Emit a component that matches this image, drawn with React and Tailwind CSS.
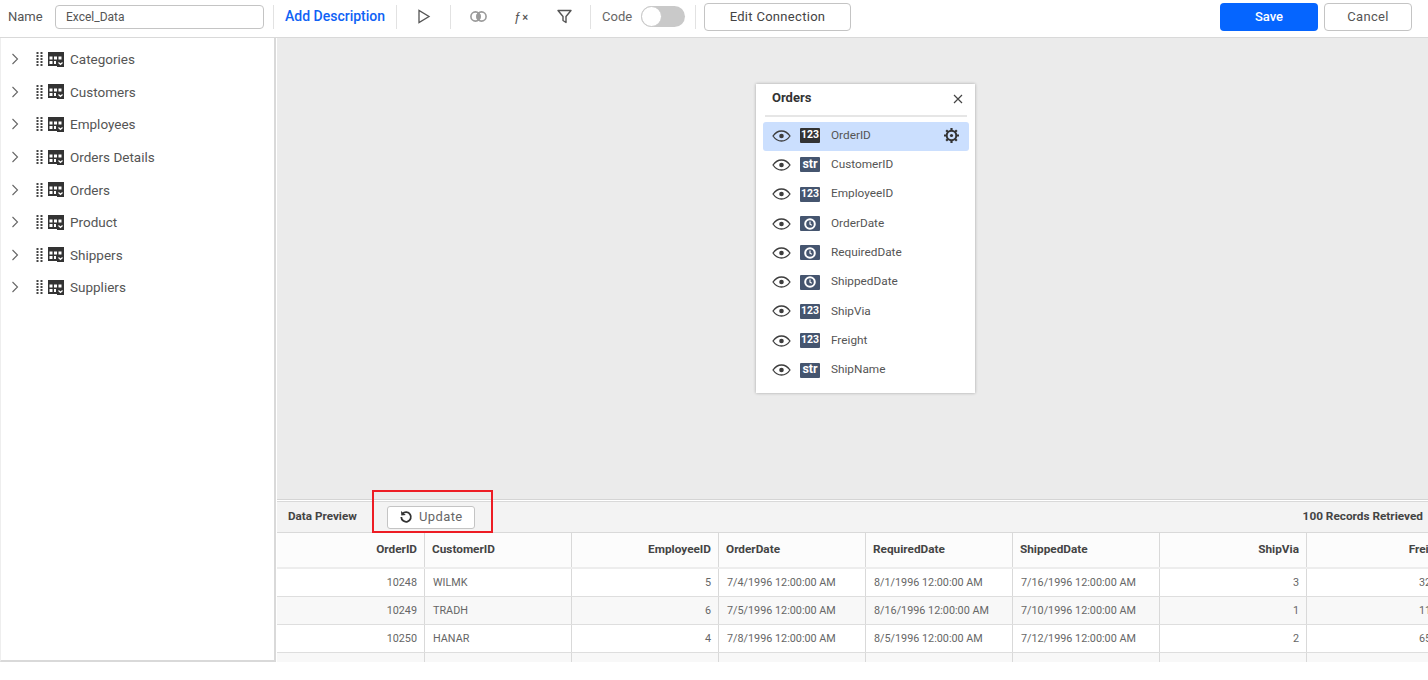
import React from 'react';

const tables = ['Categories', 'Customers', 'Employees', 'Orders Details', 'Orders', 'Product', 'Shippers', 'Suppliers'];

const fields = [
  { name: 'OrderID', type: '123', active: true },
  { name: 'CustomerID', type: 'str' },
  { name: 'EmployeeID', type: '123' },
  { name: 'OrderDate', type: 'date' },
  { name: 'RequiredDate', type: 'date' },
  { name: 'ShippedDate', type: 'date' },
  { name: 'ShipVia', type: '123' },
  { name: 'Freight', type: '123' },
  { name: 'ShipName', type: 'str' },
];

const columns = [
  { name: 'OrderID', right: true },
  { name: 'CustomerID' },
  { name: 'EmployeeID', right: true },
  { name: 'OrderDate' },
  { name: 'RequiredDate' },
  { name: 'ShippedDate' },
  { name: 'ShipVia', right: true },
  { name: 'Freight', right: true },
];

const rows = [
  ['10248', 'WILMK', '5', '7/4/1996 12:00:00 AM', '8/1/1996 12:00:00 AM', '7/16/1996 12:00:00 AM', '3', '32.38'],
  ['10249', 'TRADH', '6', '7/5/1996 12:00:00 AM', '8/16/1996 12:00:00 AM', '7/10/1996 12:00:00 AM', '1', '11.61'],
  ['10250', 'HANAR', '4', '7/8/1996 12:00:00 AM', '8/5/1996 12:00:00 AM', '7/12/1996 12:00:00 AM', '2', '65.83'],
  ['', '', '', '', '', '', '', ''],
];

const Divider = ({ className }) => <div className={`w-px h-[24px] bg-[#e2e2e2] shrink-0 ${className}`} />;

const Grip = () => (
  <svg width="7" height="14" viewBox="0 0 7 14" className="shrink-0">
    {[1, 4, 7, 10, 13].map((y) => (
      <g key={y} fill="#444">
        <rect x="0.5" y={y - 1} width="2" height="2" />
        <rect x="4.5" y={y - 1} width="2" height="2" />
      </g>
    ))}
  </svg>
);

const TableIcon = () => (
  <svg width="16" height="15" viewBox="0 0 16 15" className="shrink-0">
    <path d="M0 0h16v9h-3.500a3.500 3.500 0 0 0-3.500 3.500V14H0z" fill="#333" />
    <g fill="#fff">
      <rect x="1.500" y="4.500" width="3" height="3" />
      <rect x="6" y="4.500" width="3" height="3" />
      <rect x="10.500" y="4.500" width="3" height="3" />
      <rect x="1.500" y="9" width="3" height="3" />
      <rect x="6" y="9" width="2" height="3" />
    </g>
    <rect x="9" y="8" width="7" height="7" fill="#333" />
    <path d="M10.500 10.500l2 2 2-2" fill="none" stroke="#fff" strokeWidth="1.200" />
  </svg>
);

const Eye = () => (
  <svg width="19" height="12" viewBox="0 0 19 12" className="shrink-0">
    <path d="M1 6c2.300-3.300 5-5 8.500-5s6.200 1.700 8.500 5c-2.300 3.300-5 5-8.500 5S3.300 9.300 1 6z" fill="none" stroke="#3d3d3d" strokeWidth="1.300" />
    <circle cx="9.500" cy="6" r="2.300" fill="#3d3d3d" />
  </svg>
);

const Gear = () => (
  <svg width="15" height="15" viewBox="0 0 15 15">
    <circle cx="7.500" cy="7.500" r="4.800" fill="none" stroke="#333" strokeWidth="2" />
    <circle cx="7.500" cy="7.500" r="1.600" fill="#333" />
    <g stroke="#333" strokeWidth="2.200">
      <path d="M7.500 0v2.500M7.500 12.500V15M0 7.500h2.500M12.500 7.500H15" />
      <path d="M2.200 2.200l1.800 1.800M11 11l1.800 1.800M12.800 2.200L11 4M4 11l-1.800 1.800" />
    </g>
  </svg>
);

const TypeBadge = ({ type, active }) => (
  <div className={`w-[20px] h-[15px] rounded-[1px] flex items-center justify-center text-white font-bold shrink-0 ${active ? 'bg-[#333333]' : 'bg-[#45556f]'}`}>
    {type === 'date' ? (
      <svg width="12" height="12" viewBox="0 0 12 12">
        <circle cx="6" cy="6" r="4.800" fill="none" stroke="#fff" strokeWidth="2" />
        <path d="M6 3.500v2.700l1.800 1" fill="none" stroke="#fff" strokeWidth="1.200" />
      </svg>
    ) : (
      <span className={type === 'str' ? 'text-[12.500px] leading-none mb-px' : 'text-[10.500px] leading-none'}>{type}</span>
    )}
  </div>
);

const App = () => {
  return (
    <div className="w-[1428px] h-[680px] bg-white overflow-hidden relative font-['Roboto',sans-serif]">
      {/* toolbar */}
      <div className="h-[38px] pb-[4px] border-b border-[#d9d9d9] flex items-center text-[#555555]">
        <span className="ml-[8px] w-[47px] text-[13px]">Name</span>
        <div className="w-[209px] h-[24px] border border-[#c4c4c4] rounded-[4px] pl-[10px] flex items-center text-[12px]">Excel_Data</div>
        <Divider className="ml-[9px]" />
        <span className="ml-[11px] w-[101px] text-[14px] font-medium text-[#0f62f5] whitespace-nowrap">Add Description</span>
        <Divider className="ml-[10px]" />
        <svg width="14" height="15" viewBox="0 0 14 15" className="ml-[20px]">
          <path d="M2 1.500v12l10-6z" fill="none" stroke="#555" strokeWidth="1.300" />
        </svg>
        <Divider className="ml-[19px]" />
        <svg width="17" height="11" viewBox="0 0 17 11" className="ml-[19px]">
          <circle cx="5.500" cy="5.500" r="4.600" fill="#fff" stroke="#9a9a9a" strokeWidth="1.600" />
          <circle cx="11.500" cy="5.500" r="4.600" fill="none" stroke="#9a9a9a" strokeWidth="1.600" />
          <path d="M8.500 1.500a4.700 4.700 0 0 1 0 8 4.700 4.700 0 0 1 0-8z" fill="#9a9a9a" />
        </svg>
        <span className="ml-[27px] w-[15px] text-[13px] font-['Liberation_Sans',sans-serif] text-[#555555] leading-none whitespace-nowrap">
          ƒ<span className="text-[10px] font-bold ml-px">×</span>
        </span>
        <svg width="15" height="15" viewBox="0 0 15 15" className="ml-[28px]">
          <path d="M1 1.500h13L9 7.500v6l-3-2v-4z" fill="none" stroke="#555" strokeWidth="1.400" strokeLinejoin="round" />
        </svg>
        <Divider className="ml-[18px]" />
        <span className="ml-[11px] w-[39px] text-[13px] text-[#666666]">Code</span>
        <div className="w-[44px] h-[21px] rounded-full bg-[#c9c9c9] relative">
          <div className="absolute left-0 top-0 w-[21px] h-[21px] rounded-full bg-white border border-[#c9c9c9]" />
        </div>
        <Divider className="ml-[10px]" />
        <button className="ml-[8px] w-[147px] h-[28px] border border-[#c4c4c4] rounded-[4px] text-[13px] tracking-[0.3px] text-[#444444]">Edit Connection</button>
        <button className="ml-auto w-[98px] h-[28px] rounded-[4px] bg-[#0565ff] text-white text-[13px] font-medium">Save</button>
        <button className="ml-[6px] mr-[16px] w-[88px] h-[28px] border border-[#c4c4c4] rounded-[4px] text-[13px] tracking-[0.3px] text-[#555555]">Cancel</button>
      </div>

      <div className="h-[624px] flex">
        {/* table list */}
        <div className="w-[276px] shrink-0 border-r-2 border-b-2 border-[#d9d9d9] pt-[5px] border-l border-l-[#eeeeee]">
          {tables.map((t) => (
            <div key={t} className="h-[32.600px] flex items-center pl-[10px] text-[13.500px] text-[#555555]">
              <svg width="8" height="12" viewBox="0 0 8 12" className="shrink-0">
                <path d="M1.500 1l5 5-5 5" fill="none" stroke="#666" strokeWidth="1.100" />
              </svg>
              <div className="ml-[17px] flex items-center">
                <Grip />
              </div>
              <div className="ml-[5px]">
                <TableIcon />
              </div>
              <span className="ml-[6px]">{t}</span>
            </div>
          ))}
        </div>

        <div className="ml-px flex-1 min-w-0 flex flex-col">
          {/* canvas */}
          <div className="h-[462px] shrink-0 bg-[#ebebeb] border-b border-[#d4d4d4] pt-[46px] pl-[479px]">
            <div className="w-[219px] h-[309px] bg-white shadow-[0_0_3px_rgba(0,0,0,0.3)] pl-[7px] pr-[6px]">
              <div className="h-[33px] mx-[2px] border-b-2 border-[#e6e6e6] flex items-start justify-between pl-[7px] pr-[3px] pt-[4px]">
                <span className="text-[13px] font-bold text-[#333333]">Orders</span>
                <svg width="10" height="10" viewBox="0 0 10 10" className="mt-[6px] mr-[1px]">
                  <path d="M1 1l8 8M9 1l-8 8" stroke="#444" strokeWidth="1.200" />
                </svg>
              </div>
              <div className="mt-[5px]">
                {fields.map((f) => (
                  <div key={f.name} className={`h-[29.300px] flex items-center pl-[9px] pr-[10px] pb-[2px] rounded-[3px] ${f.active ? 'bg-[#cbdffe]' : ''}`}>
                    <Eye />
                    <div className="ml-[9px]">
                      <TypeBadge type={f.type} active={f.active} />
                    </div>
                    <span className="ml-[11px] text-[11.800px] text-[#555555]">{f.name}</span>
                    {f.active && (
                      <div className="ml-auto">
                        <Gear />
                      </div>
                    )}
                  </div>
                ))}
              </div>
            </div>
          </div>

          {/* data preview */}
          <div className="h-[32px] shrink-0 mt-px bg-[#f3f3f3] border-t border-b border-[#d9d9d9] flex items-center pl-[11px] pr-[5px] text-[#444444]">
            <span className="text-[11.700px] font-bold text-[#444444]">Data Preview</span>
            <button className="ml-[30px] w-[88px] h-[23px] bg-white border border-[#c4c4c4] rounded-[3px] flex items-center justify-center gap-[6px] text-[13px] tracking-[0.4px] text-[#666666]">
              <svg width="14" height="14" viewBox="0 0 14 14">
                <path d="M3.500 3.800a4.800 4.800 0 1 1-1.200 3.200" fill="none" stroke="#333" strokeWidth="1.800" />
                <path d="M2 1l.3 4.500 4.500-.5z" fill="#333" />
              </svg>
              Update
            </button>
            <span className="ml-auto text-[11.800px] font-bold text-[#444444]">100 Records Retrieved</span>
          </div>

          {/* grid */}
          <div className="flex-1 min-h-0 overflow-hidden">
            <div className="w-[1177px]">
              <div className="h-[36px] grid grid-cols-[148px_repeat(7,147px)] border-b-2 border-[#ededed] bg-[#fcfcfc]">
                {columns.map((c) => (
                  <div key={c.name} className={`flex items-center px-[7px] border-r border-[#d9d9d9] text-[11.800px] font-bold text-[#444444] ${c.right ? 'justify-end' : ''}`}>{c.name}</div>
                ))}
              </div>
              {rows.map((row, i) => (
                <div key={i} className={`h-[28px] grid grid-cols-[148px_repeat(7,147px)] border-b border-[#dedede] ${i % 2 ? 'bg-[#f8f8f8]' : 'bg-white'}`}>
                  {row.map((cell, j) => (
                    <div key={j} className={`flex items-center pl-[8px] pr-[7px] pt-px border-r border-[#d9d9d9] text-[10.800px] text-[#666666] whitespace-nowrap ${columns[j].right ? 'justify-end' : ''}`}>{cell}</div>
                  ))}
                </div>
              ))}
            </div>
          </div>
        </div>
      </div>

      {/* red highlight on the screenshot */}
      <div className="absolute left-[372px] top-[490px] w-[121px] h-[43px] border-2 border-[#ed1c24] pointer-events-none" />
    </div>
  );
};

export default App;
